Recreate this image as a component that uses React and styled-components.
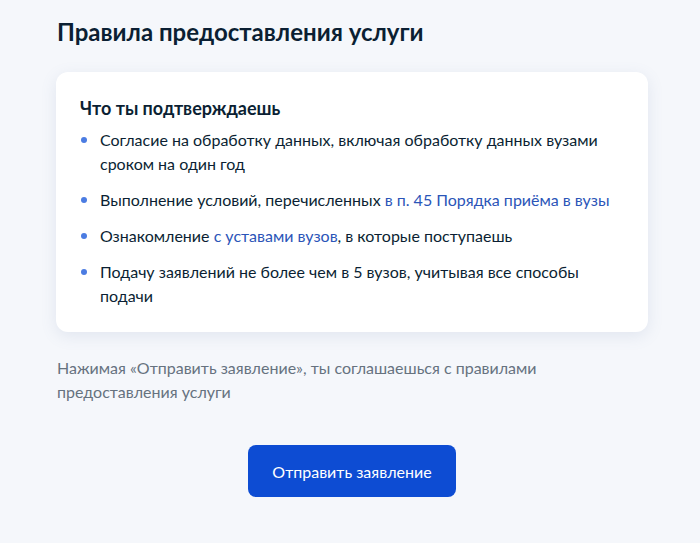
import React from "react";
import styled, { createGlobalStyle } from "styled-components";

const GlobalStyle = createGlobalStyle`
  body {
    margin: 0;
    background: #f5f7fb;
    font-family: Lato, "Noto Sans", "Liberation Sans", sans-serif;
    color: #0b1f33;
  }
`;

const items = [
  { text: "Согласие на обработку данных, включая обработку данных вузами сроком на один год" },
  { text: "Выполнение условий, перечисленных ", link: "в п. 45 Порядка приёма в вузы" },
  { text: "Ознакомление ", link: "с уставами вузов", after: ", в которые поступаешь" },
  { text: "Подачу заявлений не более чем в 5 вузов, учитывая все способы подачи" },
];

const App = () => {
  return (
    <Page>
      <GlobalStyle />
      <Title>Правила предоставления услуги</Title>
      <Card>
        <CardTitle>Что ты подтверждаешь</CardTitle>
        <List>
          {items.map((item, i) => (
            <Item key={i}>
              {item.text}
              {item.link && <Link href="#">{item.link}</Link>}
              {item.after}
            </Item>
          ))}
        </List>
      </Card>
      <Note>
        Нажимая «Отправить заявление», ты соглашаешься с правилами
        предоставления услуги
      </Note>
      <ButtonRow>
        <SubmitButton>Отправить заявление</SubmitButton>
      </ButtonRow>
    </Page>
  );
};

const Page = styled.div`
  width: 592px;
  margin: 0 0 0 56px;
  padding: 16px 0 46px;
  box-sizing: border-box;
`;

const Title = styled.h1`
  margin: 0 0 24px 1px;
  font-size: 24px;
  line-height: 32px;
  font-weight: 700;
  color: #0b1f33;
`;

const Card = styled.div`
  background: #fff;
  border-radius: 12px;
  padding: 24px;
  box-shadow: 0 4px 16px rgba(105, 130, 170, 0.14);
`;

const CardTitle = styled.h2`
  margin: 0 0 8px;
  font-size: 18px;
  line-height: 24px;
  font-weight: 700;
`;

const List = styled.ul`
  list-style: none;
  margin: 0;
  padding: 0;
  display: flex;
  flex-direction: column;
  gap: 12px;
`;

const Item = styled.li`
  position: relative;
  padding-left: 20px;
  font-size: 16px;
  line-height: 24px;
  color: #0b1f33;

  &::before {
    content: "";
    position: absolute;
    left: 1px;
    top: 9px;
    width: 6px;
    height: 6px;
    border-radius: 50%;
    background: #4b7ce2;
  }
`;

const Link = styled.a`
  color: #2b55b8;
  text-decoration: none;
`;

const Note = styled.p`
  margin: 24px 0 0 1px;
  font-size: 16px;
  line-height: 24px;
  color: #66727f;
  max-width: 500px;
`;

const ButtonRow = styled.div`
  display: flex;
  justify-content: center;
  margin-top: 41px;
`;

const SubmitButton = styled.button`
  width: 208px;
  height: 52px;
  border: none;
  border-radius: 8px;
  background: #0d4cd3;
  color: #fff;
  font-family: inherit;
  font-size: 16px;
  cursor: pointer;
`;

export default App;
